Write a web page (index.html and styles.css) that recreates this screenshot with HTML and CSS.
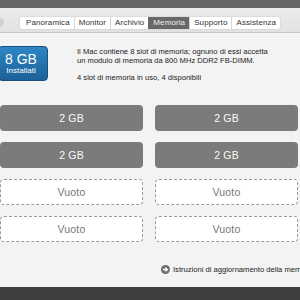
FILE: index.html
```html
<!DOCTYPE html>
<html>
<head>
<meta charset="utf-8">
<link rel="stylesheet" href="styles.css">
</head>
<body>
<div class="window">
  <div class="titlebar"></div>
  <div class="toolbar">
    <span class="winbtn"></span>
    <div class="tabs">
      <span class="tab">Panoramica</span>
      <span class="tab">Monitor</span>
      <span class="tab">Archivio</span>
      <span class="tab selected">Memoria</span>
      <span class="tab">Supporto</span>
      <span class="tab">Assistenza</span>
    </div>
  </div>
  <div class="content">
    <div class="summary">
      <div class="badge">
        <div class="badge-size">8 GB</div>
        <div class="badge-label">Installati</div>
      </div>
      <div class="info">
        <p>Il Mac contiene 8 slot di memoria; ognuno di essi accetta<br>un modulo di memoria da 800 MHz DDR2 FB-DIMM.</p>
        <p>4 slot di memoria in uso, 4 disponibili</p>
      </div>
    </div>
    <div class="slots">
      <div class="slot full">2 GB</div>
      <div class="slot full">2 GB</div>
      <div class="slot full">2 GB</div>
      <div class="slot full">2 GB</div>
      <div class="slot empty">Vuoto</div>
      <div class="slot empty">Vuoto</div>
      <div class="slot empty">Vuoto</div>
      <div class="slot empty">Vuoto</div>
    </div>
    <div class="link">
      <svg class="link-icon" width="9" height="9" viewBox="0 0 9 9"><circle cx="4.5" cy="4.5" r="4.5" fill="#6e6e6e"/><path d="M2 4.5H6.2M4.4 2.6L6.4 4.5L4.4 6.4" stroke="#fff" stroke-width="1.3" fill="none"/></svg>
      <span>Istruzioni di aggiornamento della memoria</span>
    </div>
  </div>
  <div class="bottombar"></div>
</div>
</body>
</html>
```
FILE: styles.css
```css
html, body {
  margin: 0;
  padding: 0;
  width: 300px;
  height: 300px;
  overflow: hidden;
  font-family: "Liberation Sans", Arial, sans-serif;
}
.window {
  width: 300px;
  height: 300px;
  display: flex;
  flex-direction: column;
  background: #f3f3f3;
}
.titlebar {
  height: 8px;
  background: #666;
}
.toolbar {
  background: linear-gradient(#ececec, #e2e2e2);
  border-bottom: 1px solid #c6c6c6;
  position: relative;
  display: flex;
  align-items: flex-start;
  padding-top: 9px;
  height: 15px;
}
.winbtn {
  position: absolute;
  left: -5px;
  top: 10px;
  width: 9px;
  height: 9px;
  border-radius: 50%;
  background: #d0d0d0;
}
.tabs {
  margin-left: 20px;
  display: flex;
  height: 12px;
  background: #fff;
  border-radius: 2px;
  box-shadow: 0 0 0 0.5px #cfcfcf;
}
.tab {
  font-size: 8px;
  line-height: 12px;
  letter-spacing: 0.1px;
  color: #333;
  padding: 0 4px;
  border-left: 1px solid #d6d6d6;
}
.tab:first-child {
  border-left: none;
  padding-left: 6px;
}
.tab.selected {
  background: #686868;
  color: #f0f0f0;
  border-left-color: #686868;
}
.content {
  flex: 1;
  display: flex;
  flex-direction: column;
}
.summary {
  display: flex;
  align-items: flex-start;
  margin-top: 13px;
  height: 59px;
}
.badge {
  width: 50px;
  height: 35px;
  margin-left: -2px;
  box-sizing: border-box;
  border: 1px solid #174f7e;
  border-radius: 4px;
  background: linear-gradient(#2d86c4, #1c6199);
  color: #fff;
  display: flex;
  flex-direction: column;
  align-items: center;
  justify-content: center;
  padding-right: 4px;
}
.badge-size {
  font-size: 14px;
  line-height: 14px;
}
.badge-label {
  font-size: 8px;
  line-height: 10px;
}
.info {
  margin-left: 29px;
  margin-top: 1px;
  font-size: 7.6px;
  line-height: 9px;
  color: #222;
}
.info p {
  margin: 0 0 8px 0;
}
.slots {
  display: grid;
  grid-template-columns: 143px 143px;
  grid-auto-rows: 26px;
  column-gap: 12px;
  row-gap: 11px;
}
.slot {
  box-sizing: border-box;
  border-radius: 4px;
  display: flex;
  align-items: center;
  justify-content: center;
  font-size: 10.5px;
  letter-spacing: 0.2px;
}
.slot.full {
  background: #7b7b7b;
  color: #fafafa;
}
.slot.empty {
  background: #fff;
  border: 1px dashed #9a9a9a;
  color: #777;
}
.link {
  margin-top: 23px;
  margin-left: 161px;
  display: flex;
  align-items: center;
  gap: 3px;
  font-size: 7.6px;
  color: #222;
  white-space: nowrap;
}
.link-icon {
  flex: none;
}
.bottombar {
  height: 13px;
  background: #3e3e3e;
}
```
